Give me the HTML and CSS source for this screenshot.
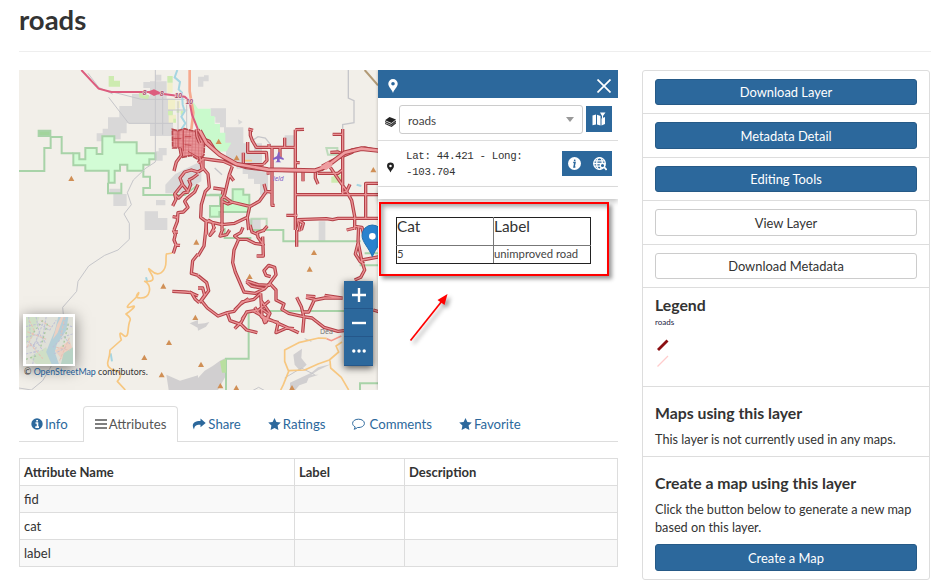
FILE: index.html
```html
<!DOCTYPE html>
<html lang="en">
<head>
<meta charset="utf-8">
<title>roads</title>
<link rel="stylesheet" href="styles.css">
</head>
<body>
<header class="page-header"><h1>roads</h1></header>
<main class="columns">
  <section class="content">
    <div class="viewer">
      <div class="map">
        <svg class="map-canvas" viewBox="3 6 1077 960" width="359" height="320" aria-label="Map">
          <defs>
            <pattern id="streets" width="10" height="9" patternUnits="userSpaceOnUse" patternTransform="rotate(3)">
              <rect width="10" height="9" fill="#ec9a9d"/><path d="M0 3H10M4 0V9" stroke="#d0686d" stroke-width="1.8"/>
            </pattern>
            <path id="peak" d="M0-9L9 7H-9Z" fill="#d08f55"/>
            <g id="roads" fill="none" stroke-linejoin="round" stroke-linecap="butt">
              <path d="M486 240L490 262 475 282 468 309M540 312L520 306 500 312 486 330 494 350 510 370 518 350 512 334M494 348L470 378 482 390 498 374 512 372M470 378L474 394 464 414M540 350L530 372 508 390 500 400 510 418 496 432 480 434 478 460 468 486M464 446L478 448M466 492H480M540 318L524 330 512 336"/>
              <path d="M535 184L537 205 545 225M545 265L553 304 540 312"/>
              <g transform="translate(540 0)">
                <path d="M0 185L15 212 34 220 52 248 76 268 110 288 145 299 210 306 290 308 350 309 373 304 392 286 430 264 462 246 500 240 546 249M372 295L400 280 425 268 465 252M0 285L15 272 45 276 76 280 103 292"/>
                <path d="M157 183V202L163 218 175 238H291M151 183L165 187M213 228V238M222 236V412L230 412M260 209V238M292 185V486M292 185L318 184M246 238V267M149 222V253H205L207 277 197 288M136 254V294M134 290H180L197 290M315 310V340M352 309L352 330 360 348M359 316H420L434 305M434 183V378M404 199H432M397 253L420 252 434 258M397 298L420 332 443 365 461 397 470 445 470 486M292 380H546M298 455L385 452 404 455 420 451H546M503 450V346H546M265 442H298M298 455L306 490M456 349L446 370 430 374M292 284H305M206 315H215"/>
                <path d="M15 270V300L30 318 34 358 22 370 10 410 8 448 24 460 26 500M46 360L76 364 73 380M103 295L94 320 107 338M94 320L80 380 72 392 72 486M76 384L100 402 155 415M220 372L204 370 198 348M204 372L184 400 155 416 148 448 110 466 72 470 20 458M148 448L152 486M208 474L194 490M72 400L90 408 105 402M30 456L44 464 48 480M298 455L316 466 310 486M470 475L492 478 497 500M446 486L470 480"/>
              </g>
              <g transform="translate(0 486)">
                <path d="M466 0L472 14 468 30 474 44 466 70M470 44L486 46M540 72L524 92 520 130 540 136M463 184L500 186 520 188 532 208 544 218M514 186L540 198"/>
              </g>
              <g transform="translate(540 486)">
                <path d="M26-26L18 48 0 78M50 0L36 16 50-10M75-5L66 18 86 14 95 0M122 28L108 60 104 98 112 126 138 186 172 190 200 176 215 160 234 134 230 112 212 106 198 122 204 136 218 140M122 28L110 18 128 8 135-8M122 28L146 28 170 40 196 44 180 22 178 8 200 0M176 78H196L194 20M156-15L162 6 180 14M144 152L180 164 216 166M146 156L160 168 198 176M0 137L26 158 32 182 10 212 28 234 60 258 88 248 108 244 132 216 168 208 188 190M110 240L128 222 152 206M88 250L96 272 130 284 146 300 178 308M110 296L130 276 146 246 182 240 214 212M132 268L140 256M215 160L234 180 234 210 258 222 252 238 272 250 316 260 342 264 378 292 420 304 438 302M188 190L192 258 204 276 216 250 188 210M168 244L200 262 240 280 302 308M240 280L234 308 266 294 288 296M170 232L192 262 214 270 242 278M296 202L310 230 318 262 314 308M324 202L350 208 332 246 316 246M350 210L380 204 434 204M324 198L352 200M380 196L430 204M296 0V50M482-12L480 35 492 95 500 120 488 142 470 150M480 40L472 72 486 94 498 102M492 90L546 80M526 240L546 246M190 250L200 278 212 252 190 236M0 174L14 174 20 196 4 218"/>
              </g>
            </g>
          </defs>
          <rect x="3" y="6" width="1077" height="960" fill="#f2efe9"/>
          <g fill="#d9d8d8">
            <path d="M342 78H382L410 92H465V174L468 204H396V166H326V196H308V214H290V220H236V196H254V182H270V148H304V114H342ZM376 42H398V60H376ZM412 20H430V38H412ZM396 40H446V92H396ZM422 240H446V262H434V278H414V250H422ZM442 350L472 318 536 286 550 290V340L490 376H442ZM286 378H326V414H286ZM414 396H442V412H414ZM380 430H420V450H448V486H380ZM274 362H308V376H274Z"/>
            <path d="M540 26H558V22H572V40H556V56H540ZM578 121H624V178H606V164H592V148H578ZM618 178H676V226H690V250H708V226H732V308L750 316V380H726V348H708V332H690V318H674V302H656V286H624V250H618ZM660 154L674 162 662 170ZM800 202H832V232H800ZM694 452H728V486H694ZM902 460H922V520H902Z"/>
            <path d="M445 920L486 938 540 922V966H452ZM515 766L540 756V780ZM540 930L560 908 584 894 606 878 622 870V926L600 966H540ZM538 768L560 766 574 762 564 776 540 788ZM826 860L852 842 850 870 866 890 846 908 830 890ZM816 944L880 914 900 898 940 888 902 906 880 920 902 920 872 930 866 944 844 952 832 966H816Z" fill="#d1cfd0"/>
          </g>
          <g fill="#cdebb0"><path d="M272 24H288V38H306V56H272ZM448 24H464V44H448ZM362 72L394 82 390 96 364 88ZM940 326L970 320V344H940Z"/></g>
          <g fill="#f1efc9"><path d="M450 92H472V126H450ZM476 98H486V120H476ZM452 140H474V164H452ZM448 45H464V74H448Z"/></g>
          <g fill="#cfeeb0"><path d="M450 128H464V142H450ZM476 124H484V134H476ZM466 152H474V164H466ZM488 128H496V140H488Z"/></g>
          <g fill="#c9facc"><path d="M525 100L540 122H578V144H590V168H606V194H622V224H640L626 250 596 252 578 224 558 214 526 150Z"/></g>
          <g stroke="#a8d3a8" stroke-width="6" fill="none">
            <path d="M3 309H79V240H98V207H131V256H166M376 308V326H396V360H376V381H500L540 350M270 344V376H310V344M556 382H608M700 510H620V480M700 486H796V520H1028M1028 560V592H1080M1028 592H1050M1040 556H1080M692 729H978M692 729V872H624V966M1026 972V946H1080"/>
            <path d="M62 188H97V204H62Z" fill="#a2d49c"/>
            <path d="M166 256H184V274H202V240H236V258H253V205H289V223H356V256H412V274H394V290H376V308H328V290H306V308H290V344H272V308H202V292H166Z" fill="#d2fcd5"/>
            <path d="M574 380H606V414H576V446H604V432H694V380H676V364H644V396H620V380Z" fill="#c9facc"/>
            <path d="M700 486V452H746V486M925 240H958V260H930Z" opacity=".7"/>
          </g>
          <path d="M606 880L624 872V914H612Z" fill="#b9dfa0"/>
          <g fill="none" stroke="#c6c6ca" stroke-width="3">
            <path d="M210 16L242 58 284 78M272 88L332 166H465M412 6V282L384 300 346 336 328 374 340 410 318 438 334 466 334 514 300 546 260 562 212 594 180 640 176 670 134 718 138 760 M100 894L74 938 40 966 3 960M284 72L370 94H500M434 70V200M480 100V200M506 96V200M450 126H508"/>
            <path d="M991 6V90L1008 98V164L974 170V240M700 220L720 206 742 210 758 230M590 300L612 320" stroke-width="4"/>
            <path d="M700 970L722 958 748 972M800 930L850 900 890 920M860 812L880 820"/>
          </g>
          <path d="M478 6L470 28 486 42 482 64 492 74 494 110 500 130 490 146 502 166 490 184M1016 350L1030 354M384 628L388 642M278 856L282 880" fill="none" stroke="#a5d5e2" stroke-width="6"/>
          <g fill="none" stroke="#f7c780" stroke-width="5" stroke-linejoin="round">
            <path d="M463 555L446 558Q444 556 444 580T430 614 400 608T400 618 380 640Q398 650 394 670T368 690 362 674Q364 680 340 702T340 716 324 738Q340 750 336 758T330 790 314 800 310 816L276 846Q276 860 270 880T292 908 298 940L322 966"/>
            <path d="M926 811L902 810 842 824 800 846 800 880 812 910 796 950 788 966M812 908L860 906 900 888 934 876 962 852 954 834 972 822M936 878L938 900 970 928 992 966M680 278H702"/>
          </g>
          <path d="M1040 6L1080 52" stroke="#b29a76" stroke-width="6"/>
          <path d="M515 6V70L526 134 520 185" fill="none" stroke="#f7a98e" stroke-width="8"/>
          <path d="M926 812L940 818 970 804" fill="none" stroke="#f59a8b" stroke-width="5"/>
          <path d="M190 6L242 62 280 72H390L500 86 514 98 522 140 540 185" fill="none" stroke="#dd5c7e" stroke-width="6"/>
          <path d="M386 72L408 64 430 74 408 84Z" fill="#dd5c7e"/>
          <g class="route"><text x="374" y="81">8</text><text x="426" y="83">8</text><text x="470" y="91">10</text><text x="503" y="107">10</text></g>
          <path d="M463 184L480 188 500 182 520 188 540 190 560 218 558 260 545 278 520 262 494 268 486 240 464 240Z" fill="url(#streets)" stroke="#b8474d" stroke-width="5" stroke-dasharray="15 2"/>
          <g fill="none" stroke="#c4484f" stroke-width="3"><path d="M466 212H490M480 188V238M496 186V250M500 206H520M500 230L520 232M510 250L545 270"/></g>
          <use href="#roads" stroke="#b23f46" stroke-width="10"/>
          <use href="#roads" stroke="#ea9295" stroke-width="4"/>
          <path d="M545 188L565 225 605 260 655 288 750 305 890 308 925 296 980 254 1030 242 1085 248" fill="none" stroke="#b23f46" stroke-width="14"/>
          <path d="M545 188L565 225 605 260 655 288 750 305 890 308 925 296 980 254 1030 242 1085 248" fill="none" stroke="#ef9da0" stroke-width="8"/>
          <path d="M905 298L930 280 945 290 925 306Z" fill="#ef9da0"/>
          <g><use href="#peak" x="160" y="332"/><use href="#peak" x="602" y="221"/><use href="#peak" x="656" y="270"/><use href="#peak" x="1066" y="306"/><use href="#peak" x="535" y="523"/><use href="#peak" x="436" y="655"/><use href="#peak" x="532" y="749"/><use href="#peak" x="453" y="824"/><use href="#peak" x="379" y="869"/><use href="#peak" x="431" y="921"/><use href="#peak" x="888" y="554"/><use href="#peak" x="875" y="604"/><use href="#peak" x="695" y="626"/><use href="#peak" x="549" y="890"/><use href="#peak" x="607" y="954"/><use href="#peak" x="655" y="960"/><use href="#peak" x="822" y="960"/></g>
          <path d="M780 254q4-6 5 0v10l12 7v5l-12-4v7l5 4h-18l5-4v-7l-12 4v-5l12-7z" fill="#8461c4"/>
          <text class="airfield" x="765" y="339">ield</text>
          <text class="place" x="906" y="797">Dea</text>
          <path d="M1063 566C1053 540 1032 522 1032 502A31 31 0 0 1 1094 502C1094 522 1073 540 1063 566Z" fill="#2982ce" stroke="#216fae" stroke-width="3"/>
          <circle cx="1063" cy="505" r="10" fill="#fff"/>
        </svg>
        <div class="zoom-bar">
          <span><svg viewBox="0 0 14 14"><path d="M7 0V14M0 7H14"/></svg></span>
          <span><svg viewBox="0 0 14 14"><path d="M0 7H14"/></svg></span>
          <span><svg class="dots" viewBox="0 0 14 14"><path d="M1.800 7H1.810M7 7H7.010M12.200 7H12.210"/></svg></span>
        </div>
        <div class="basemap">
          <svg viewBox="0 0 140 140" width="47" height="47">
            <rect width="140" height="140" fill="#dfe0d8"/>
            <path d="M0 0H40L20 60 0 80ZM60 90L80 140H30L10 120Z" fill="#cfdfc6"/>
            <path d="M96 0L86 40 72 74 60 104 76 140H98L86 106 92 80 120 40 126 0Z" fill="#b5cfd8"/>
            <path d="M92 24L104 0H112L94 48 80 66ZM86 100L130 70 140 100 110 130Z" fill="#ebd0c2"/>
            <path d="M112 108L140 90V140H104Z" fill="#b8d3c5"/>
            <path d="M0 28L40 20 70 40 90 10M0 60L40 50 60 80M20 140L30 90 0 70M30 0L40 50 20 90M60 0L50 60M80 90L110 60 140 50M100 40L130 80M110 20L140 30M0 110L40 100M84 110L120 90M8 0L14 60M50 20L30 70 50 100M0 90L56 70" fill="none" stroke="#bfc0d6" stroke-width="3" stroke-dasharray="7 4"/>
            <path d="M10 10L24 40 4 90M44 10L74 30M90 90L130 100M116 0L104 56M4 44L60 66M12 80L50 124M100 130L130 60" fill="none" stroke="#e6c1b5" stroke-width="3" stroke-dasharray="9 4"/>
            <path d="M50 10L20 50M64 20L44 88M0 126L30 116M126 20L110 90" fill="none" stroke="#a9c9a0" stroke-width="4" stroke-dasharray="6 7"/>
          </svg>
        </div>
        <p class="credit">© <a>OpenStreetMap</a> contributors.</p>
      </div>
      <aside class="identify">
        <div class="identify-head">
          <svg width="10" height="14" viewBox="0 0 10 14"><path fill-rule="evenodd" d="M5 0A4.7 4.7 0 0 0 .3 4.7C.3 8 4 10.500 5 14 6 10.500 9.700 8 9.700 4.700A4.700 4.700 0 0 0 5 0ZM5 3A1.800 1.800 0 1 1 5 6.600 1.800 1.800 0 0 1 5 3Z" fill="#fff"/></svg>
          <svg width="14" height="14" viewBox="0 0 14 14"><path d="M.5 .5L13.500 13.500M13.500 .5L.5 13.500" stroke="#fff" stroke-width="1.700"/></svg>
        </div>
        <div class="identify-row layer-row">
          <svg width="11" height="10" viewBox="0 0 11 10"><path d="M4.500 0L11 2.500 6.500 6 0 3.200Z" fill="#222"/><path d="M0 4.600L6.500 7.500 11 4M0 6.400L6.500 9.300 11 5.800" fill="none" stroke="#333" stroke-width="1.100"/></svg>
          <div class="select">roads<i></i></div>
          <span class="tool"><svg width="14" height="14" viewBox="0 0 14 14"><path d="M.5 3.500L4 2.500V12.500L.5 13.300ZM5 2.700L8.500 4V13.500L5 12.600ZM9.500 6.500L13 5V12L9.500 13.400Z" fill="#fff"/><path d="M8 .5H13.500L11 4V7L10 6V4Z" fill="#fff"/></svg></span>
        </div>
        <div class="identify-row coord-row">
          <svg width="7" height="11" viewBox="0 0 10 14"><path fill-rule="evenodd" d="M5 0A5 5 0 0 0 0 4.700C0 8 4 10.500 5 14 6 10.500 10 8 10 4.700A5 5 0 0 0 5 0ZM5 3A1.800 1.800 0 1 1 5 6.600 1.800 1.800 0 0 1 5 3Z" fill="#222"/></svg>
          <code>Lat: 44.421 - Long: <br>-103.704</code>
          <span class="tool pair">
            <svg width="13" height="13" viewBox="0 0 13 13"><circle cx="6.500" cy="6.500" r="6.500" fill="#fff"/><path d="M5.200 5.500H7L6 10H7.400M6.800 2.600L6.600 4.200" fill="none" stroke="#2c689c" stroke-width="1.500"/></svg>
            <svg width="14" height="14" viewBox="0 0 14 14"><g fill="none" stroke="#fff" stroke-width="1.300"><circle cx="6.500" cy="6.500" r="5.800"/><ellipse cx="6.500" cy="6.500" rx="2.800" ry="5.800"/><path d="M.7 6.500H12.300M1.500 3.800H11.500M1.500 9.200H8"/></g><circle cx="9.500" cy="8.500" r="2.200" fill="#2c689c" stroke="#fff" stroke-width="1.300"/><path d="M11 10L13.600 13" stroke="#fff" stroke-width="1.800"/></svg>
          </span>
        </div>
        <div class="identify-end"></div>
        <table class="feature"><tr><th>Cat</th><th>Label</th></tr><tr><td>5</td><td>unimproved road</td></tr></table>
      </aside>
      <div class="callout"></div>
      <svg class="arrow" width="44" height="56" viewBox="0 0 44 56"><path d="M2.500 49.500L34 10" stroke="#f00" stroke-width="1.700"/><path d="M39.500 3L36.500 14 29.500 9Z" fill="#f00"/></svg>
    </div>
    <nav class="tabs">
      <a class="tab"><svg width="12" height="12" viewBox="0 0 12 12"><circle cx="6" cy="6" r="5.700" fill="#2c689c"/><path d="M4.500 5H6.500V9M4.300 9.100H8M5.200 2.800H7" stroke="#fff" stroke-width="1.600" fill="none"/></svg>Info</a>
      <a class="tab active"><svg width="12" height="12" viewBox="0 0 12 12"><path d="M0 2H12M0 6H12M0 10H12" stroke="#555" stroke-width="1.500"/></svg>Attributes</a>
      <a class="tab"><svg width="14" height="12" viewBox="0 0 14 12"><path d="M8.500 .5L13.700 5 8.500 9.300V6.800C5 6.600 2.700 7 2 11.500 -.7 7 1 3 8.500 3Z" fill="#2c689c"/></svg>Share</a>
      <a class="tab"><svg width="13" height="12" viewBox="0 0 13 12"><path d="M6.500 0L8.400 4 12.800 4.600 9.600 7.600 10.400 12 6.500 9.900 2.600 12 3.400 7.600 .2 4.600 4.600 4Z" fill="#2c689c"/></svg>Ratings</a>
      <a class="tab comments"><svg width="13" height="12" viewBox="0 0 13 12"><path d="M6.500 1.200C3 1.200.6 3 .6 5.400.6 6.900 1.600 8.100 3.200 8.900 3 9.900 2.600 10.600 2 11.200 3.600 11 4.600 10.400 5.500 9.500 9.600 9.800 12.400 7.800 12.400 5.400 12.400 3 10 1.200 6.500 1.200Z" fill="none" stroke="#2c689c"/></svg>Comments</a>
      <a class="tab"><svg width="13" height="12" viewBox="0 0 13 12"><path d="M6.500 0L8.400 4 12.800 4.600 9.600 7.600 10.400 12 6.500 9.900 2.600 12 3.400 7.600 .2 4.600 4.600 4Z" fill="#2c689c"/></svg>Favorite</a>
    </nav>
    <table class="attributes">
      <colgroup><col class="c-name"><col class="c-label"><col></colgroup>
      <thead><tr><th>Attribute Name</th><th>Label</th><th>Description</th></tr></thead>
      <tbody><tr><td>fid</td><td></td><td></td></tr><tr><td>cat</td><td></td><td></td></tr><tr><td>label</td><td></td><td></td></tr></tbody>
    </table>
  </section>
  <ul class="sidebar">
    <li class="action"><a class="btn primary">Download Layer</a></li>
    <li class="action tall"><a class="btn primary">Metadata Detail</a></li>
    <li class="action"><a class="btn primary">Editing Tools</a></li>
    <li class="action tall"><a class="btn">View Layer</a></li>
    <li class="action"><a class="btn">Download Metadata</a></li>
    <li class="legend"><h4>Legend</h4><p>roads</p>
      <svg width="16" height="32" viewBox="0 0 16 32"><path d="M3 13L12.500 3.500" stroke="#8b0f12" stroke-width="2.800"/><path d="M2.500 29.500L13 19" stroke="#fcc" stroke-width="1.200"/></svg></li>
    <li class="maps"><h4>Maps using this layer</h4><p>This layer is not currently used in any maps.</p></li>
    <li class="create"><h4>Create a map using this layer</h4><p>Click the button below to generate a new map based on this layer.</p><a class="btn primary">Create a Map</a></li>
  </ul>
</main>
</body>
</html>
```
FILE: styles.css
```css
* { box-sizing: border-box; }
body { margin: 0; padding: 0 0 0 19px; width: 932px; height: 581px; overflow: hidden; background: #fff; color: #333; font: 13px/18px Lato, "Open Sans", sans-serif; }
h1, h4, p, ul { margin: 0; padding: 0; }
.page-header { width: 912px; height: 52px; margin-bottom: 18px; padding-top: 5px; border-bottom: 1px solid #eee; }
h1 { font-size: 27.500px; line-height: 30px; font-weight: 700; }
.columns { display: flex; gap: 24px; align-items: flex-start; }
.content { width: 599px; }
.viewer { position: relative; display: flex; height: 320px; }
.map { position: relative; width: 359px; height: 320px; overflow: hidden; }
.map-canvas { display: block; }
.route { font: italic 700 20px "Liberation Sans", sans-serif; fill: #a64f6b; stroke: #f6dfe2; stroke-width: 3px; paint-order: stroke; }
.airfield { font: italic 20px "Noto Sans", sans-serif; fill: #8461c4; }
.place { font: 21px "Noto Sans", sans-serif; fill: #777; }
.zoom-bar { position: absolute; left: 325px; top: 211px; width: 29px; box-shadow: 0 2px 7px rgba(0,0,0,.65); background: #2c689c; }
.zoom-bar span { display: flex; height: 28px; align-items: center; justify-content: center; border-bottom: 1px solid #25578a; }
.zoom-bar span:last-child { height: 29px; }
.zoom-bar svg { width: 14px; height: 14px; fill: none; stroke: #fff; stroke-width: 2.4; }
.zoom-bar .dots { stroke-width: 3.4; stroke-linecap: round; }
.basemap { position: absolute; left: 4px; top: 244px; width: 52px; height: 52px; border: 2px solid #fff; background: #fff; box-shadow: 0 3px 14px rgba(0,0,0,.5); }
.basemap svg { display: block; margin: .5px; }
.credit { position: absolute; left: 5px; top: 296px; font-size: 8.850px; line-height: 12px; white-space: nowrap; }
.credit a { color: #1d5c96; }
.identify { width: 240px; background: #fff; box-shadow: 0 0 3px rgba(0,0,0,.25); clip-path: inset(0 0 0 -4px); position: relative; font-size: 12px; }
.identify-head { height: 28px; padding: 3px 7px 0 10px; display: flex; align-items: center; justify-content: space-between; background: #2c689c; }
.identify-row { display: flex; align-items: center; border-bottom: 1px solid #ddd; }
.layer-row { height: 43px; padding: 0 6px 0 7px; }
.layer-row > svg { margin: 6px 3px 0 0; }
.select { width: 184px; height: 29px; margin-right: 3px; padding: 1px 8px 0; display: flex; align-items: center; justify-content: space-between; border: 1px solid #ccc; border-radius: 3px; font-size: 11.700px; color: #444; }
.select i { border: 4px solid transparent; border-top: 5px solid #999; border-bottom: 0; }
.tool { display: flex; width: 26px; height: 26px; align-items: center; justify-content: center; background: #2c689c; }
.coord-row { height: 46px; padding: 0 6px 0 9px; }
.coord-row > svg { margin-top: 8px; }
code { flex: 1; margin: 0 0 0 12px; font: 10.800px/16px "Liberation Mono", monospace; letter-spacing: -.35px; }
.pair { width: 50px; height: 25px; gap: 12px; }
.identify-end { height: 12px; box-shadow: 0 3px 5px rgba(0,0,0,.22); }
.feature { width: 195px; height: 46px; margin: 18px 0 0 18px; border: 1px solid #222; border-collapse: collapse; table-layout: fixed; font-size: 11.300px; }
.feature th, .feature td { padding: 0; border: 1px solid #777; text-align: left; line-height: 14px; }
.feature th { height: 28px; padding-bottom: 10px; font-size: 15.400px; font-weight: 400; line-height: 17px; border-top-color: #222; }
.feature td { height: 18px; padding-bottom: 2px; color: #444; border-bottom-color: #222; }
.feature tr > :first-child { border-left-color: #222; }
.feature tr > :last-child { border-right-color: #222; }
.callout { position: absolute; left: 360px; top: 132px; width: 230px; height: 74px; border: 2px solid #f00; box-shadow: 3px 3px 4px rgba(0,0,0,.4), inset 3px 3px 4px rgba(0,0,0,.3); }
.arrow { position: absolute; left: 389px; top: 221px; filter: drop-shadow(3px 3px 2px rgba(0,0,0,.4)); }
.tabs { display: flex; height: 36px; margin: 16px 0; border-bottom: 1px solid #ddd; color: #2c689c; font-size: 13.200px; }
.tab { display: flex; gap: 2px; align-items: center; height: 36px; padding: 0 12px 2px 11px; border: 1px solid transparent; border-bottom: 0; margin-right: 2px; white-space: nowrap; }
.tab.active { border-color: #ddd; border-radius: 4px 4px 0 0; background: #fff; color: #555; padding: 0 11px 2px; }
.comments { gap: 4px; }
.attributes { width: 599px; border-collapse: collapse; table-layout: fixed; }
.c-name { width: 275px; }
.c-label { width: 110px; }
.attributes th, .attributes td { height: 27px; padding: 0 4px; border: 1px solid #ddd; text-align: left; }
.attributes th { font-weight: 700; }
.attributes tbody tr:nth-child(odd) { background: #f9f9f9; }
.sidebar { width: 288px; border: 1px solid #ddd; border-radius: 3px; list-style: none; }
.sidebar li { padding: 8px 12px; border-bottom: 1px solid #ddd; }
.sidebar li:last-child { border-bottom: 0; }
.sidebar .action { height: 43px; }
.sidebar .tall { height: 44px; }
.btn { display: flex; height: 26px; align-items: center; justify-content: center; border: 1px solid #ccc; border-radius: 3px; font-size: 12.900px; }
.tall .btn, .create .btn { height: 27px; }
.primary { background: #2c689c; border-color: #265a87; color: #fff; }
h4 { font-size: 15.800px; line-height: 18px; font-weight: 700; }
.sidebar .legend { height: 99px; padding-top: 8px; }
.legend p { font-size: 8px; line-height: 12px; margin-top: 2px; color: #224; }
.legend svg { display: block; margin-top: 9px; }
.sidebar .maps { height: 70px; padding-top: 17px; }
.maps p { margin-top: 8px; font-size: 12.700px; white-space: nowrap; }
.sidebar .create { height: 122px; padding-top: 17px; }
.create p { margin: 8px 0; font-size: 12.700px; }
```
